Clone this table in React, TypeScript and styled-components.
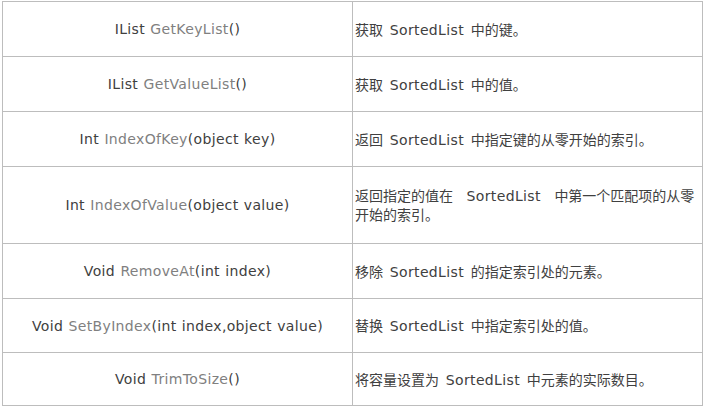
import React from "react";
import styled, { createGlobalStyle } from "styled-components";

const Global = createGlobalStyle`
  html, body { margin: 0; padding: 0; background: #fff; }
  body { font-family: 'DejaVu Sans', sans-serif; }
`;

const Page = styled.div`
  padding: 1px 0 0 2px;
`;

const Table = styled.table`
  width: 700px;
  border-collapse: collapse;
  table-layout: fixed;
  font-family: 'DejaVu Sans', sans-serif;
  font-size: 14px;
  letter-spacing: 0.35px;
  color: #404040;
`;

const Row = styled.tr<{ $h: number }>`
  height: ${(p) => p.$h}px;
`;

const Cell = styled.td<{ $center?: boolean }>`
  border: 1px solid #bdbdbd;
  padding: ${(p) => (p.$center ? "0 3px" : "0 0 0 2px")};
  line-height: 18px;
  vertical-align: middle;
  text-align: ${(p) => (p.$center ? "center" : "left")};
  word-spacing: ${(p) => (p.$center ? "0.5px" : "2px")};
  word-break: break-all;
`;

const Name = styled.span`
  color: #808080;
`;

const Cjk = styled.span`
  font-family: 'Noto Sans CJK SC', sans-serif;
  font-size: 14px;
  letter-spacing: 0;
`;

type R = { type: string; name: string; args: string; desc: React.ReactNode; h: number };

const rows: R[] = [
  { type: "IList", name: "GetKeyList", args: "()", desc: <><Cjk>获取</Cjk> SortedList <Cjk>中的键。</Cjk></>, h: 55 },
  { type: "IList", name: "GetValueList", args: "()", desc: <><Cjk>获取</Cjk> SortedList <Cjk>中的值。</Cjk></>, h: 55 },
  { type: "Int", name: "IndexOfKey", args: "(object key)", desc: <><Cjk>返回</Cjk> SortedList <Cjk>中指定键的从零开始的索引。</Cjk></>, h: 55 },
  {
    type: "Int",
    name: "IndexOfValue",
    args: "(object value)",
    desc: <><Cjk>返回指定的值在</Cjk>&nbsp; SortedList &nbsp;<Cjk>中第一个匹配项的从零开始的索引。</Cjk></>,
    h: 77,
  },
  { type: "Void", name: "RemoveAt", args: "(int index)", desc: <><Cjk>移除</Cjk> SortedList <Cjk>的指定索引处的元素。</Cjk></>, h: 55 },
  { type: "Void", name: "SetByIndex", args: "(int index,object value)", desc: <><Cjk>替换</Cjk> SortedList <Cjk>中指定索引处的值。</Cjk></>, h: 54 },
  { type: "Void", name: "TrimToSize", args: "()", desc: <><Cjk>将容量设置为</Cjk> SortedList <Cjk>中元素的实际数目。</Cjk></>, h: 53 },
];

export default function App() {
  return (
    <Page>
      <Global />
      <Table>
        <colgroup>
          <col style={{ width: 350 }} />
          <col style={{ width: 350 }} />
        </colgroup>
        <tbody>
          {rows.map((r) => (
            <Row key={r.name} $h={r.h}>
              <Cell $center>
                {r.type} <Name>{r.name}</Name>
                {r.args}
              </Cell>
              <Cell>{r.desc}</Cell>
            </Row>
          ))}
        </tbody>
      </Table>
    </Page>
  );
}
